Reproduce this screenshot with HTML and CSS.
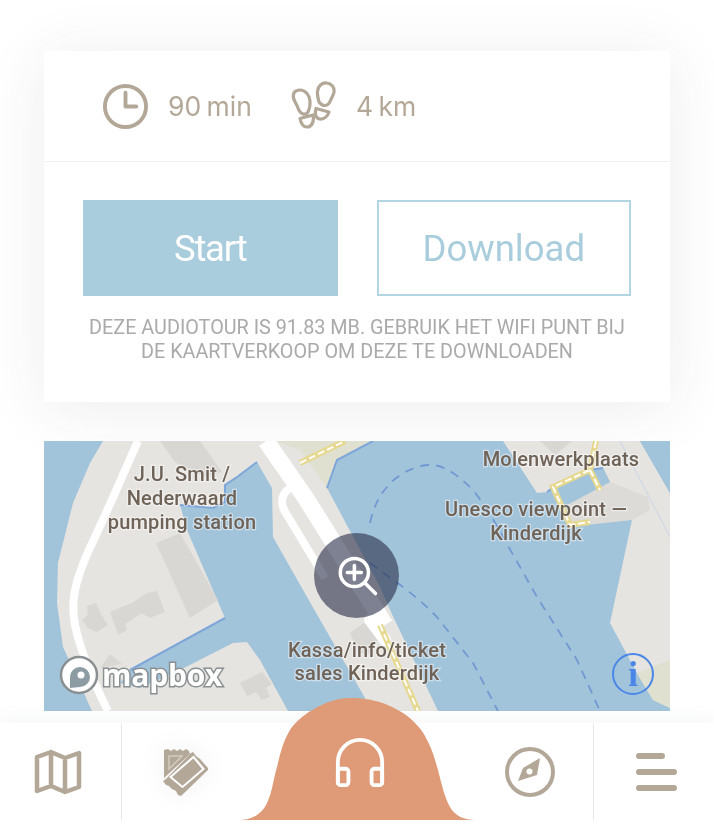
FILE: index.html
```html
<!DOCTYPE html>
<html lang="nl">
<head>
<meta charset="utf-8">
<title>Audiotour</title>
<link rel="stylesheet" href="styles.css">
</head>
<body>
<div class="page">
  <section class="card">
    <div class="stats">
      <div class="stat">
        <svg class="stat-icon clock" viewBox="0 0 48 48"><circle cx="24" cy="24" r="21" class="line"/><path d="M24 10v14h11" class="line"/></svg>
        <span>90 min</span>
      </div>
      <div class="stat">
        <svg class="stat-icon steps" viewBox="0 0 46 48">
          <path class="line thin" d="M2.5 17C1.5 12 4 9 9 9c5.5 0 9.5 5 10 11 .3 4-.5 8-2 11-1 2-3 2.500-5 2-3-1-4-3-5-6-1-3.500-3.500-6-4.500-10z"/>
          <path class="line thin" d="M9 37.5l13-3.500c1.500 6-1 12-6 12-3.500 0-6-3.500-7-8.500z"/>
          <path class="line thin" d="M28 21c-1-4-2-7-1.500-11C27 5 31 1.500 35.500 2c5 .5 8 4 7.500 9-.5 3.500-3 7-4 9.500-1 2.500-2.500 4-5.500 4-2.500 0-4-1.500-5.500-3.500z"/>
          <path class="line thin" d="M25 27.5l13 3.500c-1.500 4.500-5 7.500-9 7-4.500-.5-5.500-5.500-4-10.500z"/>
        </svg>
        <span>4 km</span>
      </div>
    </div>
    <div class="actions">
      <div class="buttons">
        <a class="btn btn-solid">Start</a>
        <a class="btn btn-outline">Download</a>
      </div>
      <p class="note">Deze audiotour is 91.83 MB. Gebruik het wifi punt bij<br>de kaartverkoop om deze te downloaden</p>
    </div>
  </section>

  <section class="map">
    <svg class="map-art" viewBox="44 441 626 270">
      <rect class="water" x="44" y="441" width="626" height="270"/>
      <!-- left land -->
      <path class="land" d="M103 441L90 463 73 503 58 563 57 603 63 647 92 711H288L260 660 247 642 233 643 180 670 140 688 120 683 130 670 225 618 187 530 180 505 213 508 225 502 225 485 237 477 257 462 272 488 273 537 307 597 365 698 368 711H438L390 610 380 587 327 488 337 460 373 441H257Z"/>
      <path class="olive" d="M275 441H373L337 460 327 488 300 450 Z"/>
      <path class="shore" d="M373 441L337 460 327 488M257 462L237 477 225 485 225 502 213 508 180 505M225 618L130 670"/>
      <!-- right land -->
      <path class="land" d="M503 441H640L670 493V708L653 700 637 673 610 623 632 520 630 510 567 527 567 505 610 482 603 468 570 476 547 492 537 493Z"/>
      <path class="olive" d="M637 673L670 660V708L653 700Z"/>
      <path class="water" d="M640 441H670V493Z"/>
      <path class="pier" d="M567 505L610 482 648 497 650 510 632 520 567 527Z"/>
      <path class="water" d="M547 492C565 478 585 470 603 468L610 482 567 505Z"/>
      <path class="shore" d="M547 492C565 478 585 470 603 468"/>
      <path class="thin-road" d="M620 441L670 537"/>
      <!-- buildings -->
      <path class="bld" d="M160 441H200L222 472 205 477 175 462Z"/>
      <path class="bld" d="M156 543L180 533 218 600 190 618Z"/>
      <path class="bld" d="M87 606L96 603 102 616 108 625 97 632 88 628 82 620 88 615Z"/>
      <path class="bld" d="M110 612L132 603 147 593 157 591 165 612 150 618 142 613 125 624 127 630 118 635Z"/>
      <path class="bld" d="M240 683L262 672 272 684 266 688 270 697 262 700 256 692 247 696Z"/>
      <path class="bld" d="M100 668L110 654 122 664Z"/>
      <path class="bld" d="M350 633L365 622 378 640 368 655 358 652Z"/>
      <path class="bld" d="M540 441H572L555 455Z"/>
      <!-- roads -->
      <path class="road" d="M138 441C125 470 108 510 88 552 76 580 70 600 75 625 80 650 95 685 108 711"/>
      <path class="road wide" d="M266 441L305 497 385 625"/>
      <path class="road" d="M290 488C280 495 280 505 287 515L325 578"/>
      <path class="road thin-white" d="M370 620L385 640"/>
      <path class="path-base" d="M300 463L345 441M380 625L418 711M596 441L590 470 553 487 570 525 590 522M590 470L600 490"/>
      <path class="path-dash" d="M300 463L345 441M380 625L418 711M596 441L590 470 553 487 570 525 590 522M590 470L600 490"/>
      <path class="ferry" d="M370 523C374 505 380 495 387 487 395 477 410 467 427 465 440 464 453 470 473 490 485 505 495 522 503 537L537 597 577 660 600 711"/>
      <path class="ferry" d="M370 563L403 587C420 600 430 610 437 617L473 663 498 711"/>
      <!-- labels -->
      <text class="label" x="182" y="481">J.U. Smit /</text>
      <text class="label" x="182" y="505">Nederwaard</text>
      <text class="label" x="182" y="529">pumping station</text>
      <text class="label" x="561" y="466">Molenwerkplaats</text>
      <text class="label" x="536" y="516">Unesco viewpoint —</text>
      <text class="label" x="536" y="540">Kinderdijk</text>
      <text class="label" x="367" y="657">Kassa/info/ticket</text>
      <text class="label" x="367" y="680">sales Kinderdijk</text>
      <!-- attribution -->
      <circle class="mb-ring" cx="79" cy="675" r="18"/>
      <path class="mb-pin" d="M70 688V677a10 10 0 1 1 10 10z"/>
      <circle class="mb-hole" cx="81" cy="675" r="3.5"/>
      <text class="mb-word" x="102" y="686">mapbox</text>
      <circle class="info-ring" cx="633" cy="674" r="20"/>
      <text class="info-i" x="633" y="686">i</text>
    </svg>
    <div class="zoom-btn">
      <svg viewBox="0 0 50 50" class="zoom-icon"><circle cx="22" cy="21" r="16"/><path d="M22 13v16M14 21h16M34 33l12 12"/></svg>
    </div>
  </section>

  <nav class="nav">
    <div class="nav-item nav-first">
      <svg class="nav-icon map-ic" viewBox="0 0 48 46"><path class="line nav-line" d="M3 8l14-5 14 6 14-5v34l-14 5-14-6-14 5zM17 3v34M31 9v34"/></svg>
    </div>
    <div class="nav-item nav-second">
      <svg class="nav-icon ticket-ic" viewBox="0 0 48 50">
        <path class="fill" d="M3 2L7 1 10 3 13 1 16 3 19 1 22 3 25 1 28 3 29 6 3 30Z"/>
        <path class="ticket-back" d="M8 8H21L8 21Z"/>
        <path class="ticket-front" d="M2 33L5 31 30 5 32 4 35 8 39 11 47 20 47 22 20 48 17 47 15 43 11 41 8 38 5 37Z"/>
        <path class="ticket-in" d="M32.5 9L42.5 21 21.5 39 9.5 29Z"/>
      </svg>
    </div>
    <div class="nav-item nav-center">
      <svg class="blob" viewBox="0 0 236 122" preserveAspectRatio="none"><path d="M0 122C14 122 23 114 27 105 33 92 33 82 37 69 41 52 44 42 50 32 58 19 85 0 110 0 135 0 150 7 163 15 175 23 183 33 187 42 193 53 195 62 198 72 202 88 205 100 210 109 215 118 224 122 236 122Z"/></svg>
      <svg class="phones" viewBox="0 0 54 54"><path d="M4 48V26a23 23 0 0 1 46 0v22"/><rect x="4" y="33" width="11" height="17" rx="3"/><rect x="39" y="33" width="11" height="17" rx="3"/></svg>
    </div>
    <div class="nav-item nav-fourth">
      <svg class="nav-icon compass" viewBox="0 0 52 52"><circle class="line" cx="26" cy="26" r="23"/><path class="fill" d="M36 12L33 29 14 35 19 22z"/><circle class="fill-white" cx="25.5" cy="25.5" r="3"/></svg>
    </div>
    <div class="nav-item nav-last">
      <div class="burger"><span class="bar bar-short"></span><span class="bar"></span><span class="bar"></span></div>
    </div>
  </nav>
</div>
</body>
</html>
```
FILE: styles.css
```css
* { box-sizing: border-box; }
html, body { margin: 0; height: 100%; background: #fff; }
body { width: 714px; height: 830px; overflow: hidden; font-family: Roboto, "Liberation Sans", sans-serif; }
.page { padding-top: 51px; filter: blur(0.6px); height: 830px; overflow: hidden; background: #fff; }

.card { margin: 0 44px; background: #fff; height: 351px; box-shadow: 0 6px 60px rgba(60, 60, 60, .09); }
.stats { display: flex; align-items: center; height: 111px; padding: 0 0 0 58px; gap: 39px; border-bottom: 1px solid #efefef; }
.stat { display: flex; align-items: center; gap: 19px; color: #b3a898; font-family: Inter, Roboto, sans-serif; font-size: 26.5px; word-spacing: -2px; }
.stat-icon { display: block; flex: none; }
.clock { width: 47px; height: 47px; }
.steps { width: 46px; height: 48px; margin-top: -2px; }
.line { fill: none; stroke: #b3a898; stroke-width: 4; stroke-linecap: round; stroke-linejoin: round; }
.thin { stroke-width: 3.2; }
.fill { fill: #b3a898; }
.fill-white { fill: #fff; }

.actions { padding: 38px 39px 0; }
.buttons { display: grid; grid-template-columns: 1fr 1fr; gap: 39px; }
.btn { height: 96px; display: flex; align-items: center; justify-content: center; font-size: 36.5px; }
.btn-solid { background: #a9cddc; color: #fff; letter-spacing: -1.2px; }
.btn-outline { border: 2px solid #b3d5e3; color: #a9cddc; background: #fff; }
.note { margin: 20px 0 0; text-align: center; text-transform: uppercase; color: #aaa; font-size: 19.8px; line-height: 24px; white-space: nowrap; }

.map { position: relative; margin: 39px 44px 0; height: 270px; overflow: hidden; }
.map-art { display: block; width: 626px; height: 270px; }
.water { fill: #a2c4da; }
.land { fill: #e5e4e0; }
.pier { fill: #dcdbd8; }
.olive { fill: #dfe0cf; }
.bld { fill: #d8d7d3; }
.shore { fill: none; stroke: #7fa6d9; stroke-width: 2; }
.thin-road { fill: none; stroke: #c9d4e6; stroke-width: 1; }
.road { fill: none; stroke: #fff; stroke-width: 8; stroke-linejoin: round; }
.wide { stroke-width: 17; }
.thin-white { stroke-width: 12; stroke-linecap: round; }
.path-base { fill: none; stroke: #e6d88e; stroke-width: 6; }
.path-dash { fill: none; stroke: #fff; stroke-width: 2; stroke-dasharray: 7 3; }
.ferry { fill: none; stroke: #7099d2; stroke-width: 1.8; stroke-dasharray: 9 7; }
.label { font-family: Roboto, sans-serif; font-weight: 500; font-size: 20px; fill: #6f6257; text-anchor: middle; stroke: rgba(255, 255, 255, .45); stroke-width: 2.5px; paint-order: stroke; letter-spacing: .2px; }
.mb-ring { fill: #fff; stroke: #8a8f92; stroke-width: 2.5; }
.mb-pin { fill: #8d9ba3; }
.mb-hole { fill: #fff; }
.mb-word { font-family: "Open Sans", sans-serif; font-weight: 700; font-size: 30px; fill: #fff; stroke: #8a8f92; stroke-width: 3px; paint-order: stroke; letter-spacing: -.2px; }
.info-ring { fill: none; stroke: #4a86e8; stroke-width: 2; }
.info-i { font-family: "Liberation Serif", serif; font-weight: 700; font-size: 35px; fill: #4a86e8; text-anchor: middle; }

.zoom-btn { position: absolute; left: 270px; top: 92px; width: 85px; height: 85px; border-radius: 50%; background: rgba(40, 45, 72, .6); display: flex; align-items: center; justify-content: center; }
.zoom-icon { width: 44px; height: 44px; fill: none; stroke: #fff; stroke-width: 4; stroke-linecap: round; }

.nav { position: relative; display: flex; align-items: center; height: 97px; margin-top: 12px; background: #fff; box-shadow: 0 -8px 12px rgba(120, 130, 130, .05); }
.nav-item { height: 97px; display: flex; align-items: center; justify-content: center; }
.nav-first { width: 122px; border-right: 1px solid #e8e8e8; }
.nav-second { width: 125px; }
.nav-center { width: 226px; position: relative; }
.nav-fourth { width: 121px; border-right: 1px solid #e8e8e8; }
.nav-last { width: 120px; justify-content: flex-start; padding-left: 42px; }
.blob { position: absolute; left: -7px; bottom: 0; width: 236px; height: 122px; }
.blob path { fill: #df9a77; }
.phones { position: relative; width: 52px; height: 52px; margin-top: -18px; fill: none; stroke: #fff; stroke-width: 4; stroke-linecap: round; stroke-linejoin: round; }
.nav-icon { display: block; }
.map-ic { width: 48px; height: 46px; margin-right: 6px; }
.nav-line { stroke-width: 4.5; }
.ticket-ic { width: 48px; height: 50px; margin-top: 3px; filter: drop-shadow(0 0 12px rgba(0, 0, 0, .06)); }
.ticket-back { fill: none; stroke: #d3ccc1; stroke-width: 1.5; }
.ticket-front { fill: #b3a898; }
.ticket-in { fill: #b3a898; stroke: #fff; stroke-width: 2; }
.compass { width: 52px; height: 52px; margin-right: 7px; }
.burger { display: flex; flex-direction: column; align-items: flex-start; gap: 10px; }
.bar { display: block; width: 41px; height: 6px; border-radius: 3px; background: #b3a898; }
.bar-short { width: 29px; }
```
